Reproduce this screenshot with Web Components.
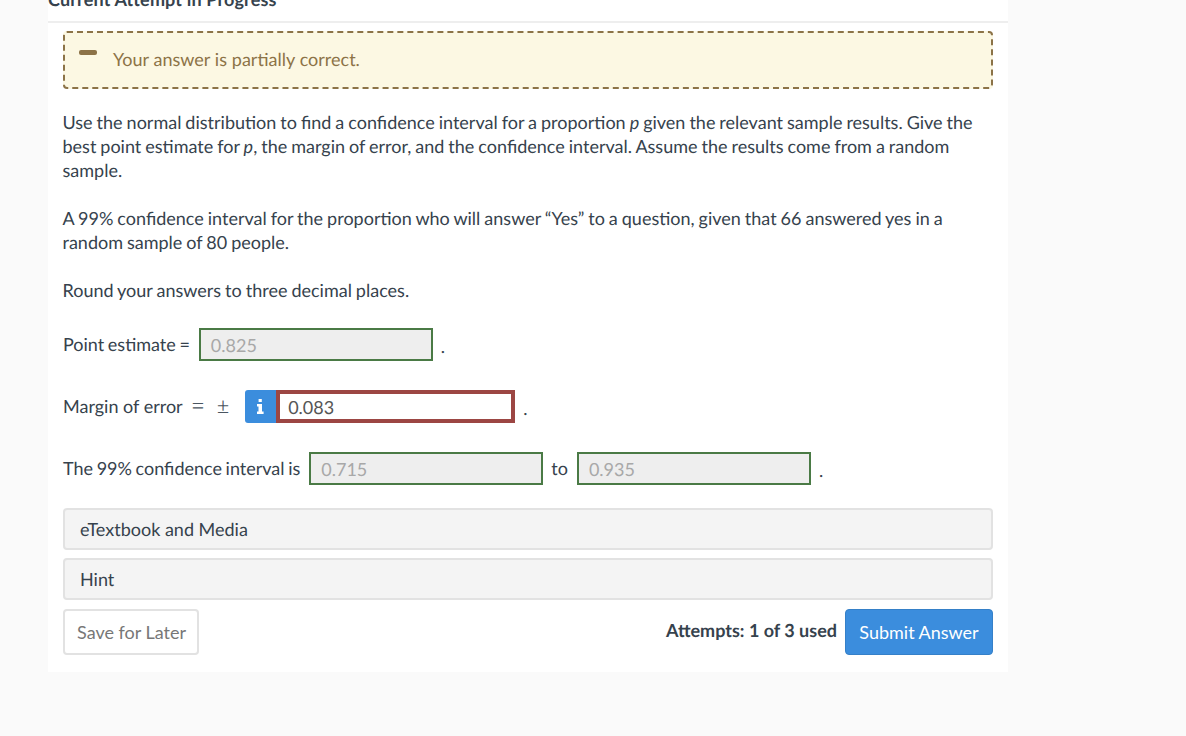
<!DOCTYPE html>
<html lang="en">
<head>
<meta charset="utf-8">
<title>Current Attempt in Progress</title>
<style>
    html, body { margin: 0; height: 736px; overflow: hidden; background: #fafafa; }
    body { font: 18px/24px Lato, "Liberation Sans", sans-serif; color: #36424d; text-rendering: geometricPrecision; }
    i { font-family: Lato, "Liberation Serif", serif; }
    .math { font: 22px/24px "Liberation Serif", serif; color: #4a5560; }
    .tight { word-spacing: -1px; }
</style>
</head>
<body>
<question-panel heading="Current Attempt in Progress">
    <status-alert>Your answer is partially correct.</status-alert>
    <question-text first>Use the normal distribution to find a confidence interval for a proportion <i>p</i> given the relevant sample results. Give the best point estimate for <i>p</i>, the margin of error, and the confidence interval. Assume the results come from a random sample.</question-text>
    <question-text>A 99% confidence interval for the proportion who will answer “Yes” to a question, given that 66 answered yes in a random sample of 80 people.</question-text>
    <question-text>Round your answers to three decimal places.</question-text>
    <answer-row top="26">
        <span class="tight">Point estimate =</span>
        <answer-field value="0.825" state="correct"></answer-field>
        <span class="dot">.</span>
    </answer-row>
    <answer-row top="29">
        <span>Margin of error</span><span class="math">=</span><span class="math" style="margin-left:4px;margin-right:7px">±</span>
        <answer-field value="0.083" state="wrong" info></answer-field>
        <span class="dot">.</span>
    </answer-row>
    <answer-row top="29">
        <span class="tight">The 99% confidence interval is</span>
        <answer-field value="0.715" state="correct"></answer-field>
        <span style="margin-left:-1px">to</span>
        <answer-field value="0.935" state="correct"></answer-field>
        <span class="dot">.</span>
    </answer-row>
    <collapse-bar top="23">eTextbook and Media</collapse-bar>
    <collapse-bar top="8">Hint</collapse-bar>
    <form-actions attempts="Attempts: 1 of 3 used"></form-actions>
</question-panel>

<script>
class QuestionPanel extends HTMLElement {
    constructor() {
        super();
        this.attachShadow({ mode: 'open' });
        this.shadowRoot.innerHTML = `
            <style>
                :host {
                    display: block;
                    width: 960px;
                    margin: -13px 0 0 48px;
                    background: #fff;
                }
                h2 {
                    margin: 0;
                    padding: 0 0 10px;
                    font-size: 18px;
                    line-height: 24px;
                    font-weight: 700;
                    letter-spacing: 0.15px;
                    border-bottom: 2px solid #eee;
                }
                .body {
                    padding: 8px 15px 17px;
                }
            </style>
            <h2></h2>
            <div class="body"><slot></slot></div>
        `;
        this.shadowRoot.querySelector('h2').textContent = this.getAttribute('heading');
    }
}

class StatusAlert extends HTMLElement {
    constructor() {
        super();
        this.attachShadow({ mode: 'open' });
        this.shadowRoot.innerHTML = `
            <style>
                :host {
                    display: flex;
                    box-sizing: border-box;
                    height: 58px;
                    padding: 14px 14px 0;
                    gap: 16px;
                    background: #fcf8e3;
                    border: 2px dashed #8c7347;
                    border-radius: 4px;
                    color: #8c7347;
                    word-spacing: 0.25px;
                }
                .icon {
                    width: 18px;
                    height: 5px;
                    margin-top: 3px;
                    flex: none;
                    background: #8c7347;
                    border-radius: 2px;
                }
            </style>
            <span class="icon"></span>
            <span><slot></slot></span>
        `;
    }
}

class QuestionText extends HTMLElement {
    constructor() {
        super();
        this.attachShadow({ mode: 'open' });
        this.shadowRoot.innerHTML = `
            <style>
                :host { display: block; margin: 24px 0 0 -0.5px; word-spacing: -0.62px; }
                :host([first]) { margin-top: 21px; }
            </style>
            <slot></slot>
        `;
    }
}

class AnswerRow extends HTMLElement {
    constructor() {
        super();
        this.attachShadow({ mode: 'open' });
        this.shadowRoot.innerHTML = `
            <style>
                :host {
                    display: flex;
                    align-items: center;
                    gap: 9px;
                    height: 33px;
                    margin-top: ${this.getAttribute('top')}px;
                }
                ::slotted(span) { margin-bottom: 2px; }
                ::slotted(.dot) { margin: 2px 0 0 -1px; }
            </style>
            <slot></slot>
        `;
    }
}

class AnswerField extends HTMLElement {
    constructor() {
        super();
        this.attachShadow({ mode: 'open' });
        const wrong = this.getAttribute('state') === 'wrong';
        const info = this.hasAttribute('info');
        this.shadowRoot.innerHTML = `
            <style>
                :host { display: inline-flex; height: 33px; }
                .info {
                    width: 31px;
                    display: flex;
                    align-items: center;
                    justify-content: center;
                    background: #3b8ddd;
                    border-radius: 3px 0 0 3px;
                }
                .value {
                    box-sizing: border-box;
                    width: ${info ? 239 : 234}px;
                    height: 33px;
                    padding: 0 10px;
                    line-height: 31px;
                    border: 2px solid #4a7a45;
                    background: #eee;
                    color: #a8a8a8;
                }
                .value.wrong {
                    border: 4px solid #9c4643;
                    background: #fff;
                    color: #555;
                    padding: 0 8px;
                    line-height: 26px;
                }
            </style>
            ${info ? `<span class="info"><svg width="9" height="15" viewBox="0 0 9 15"><path fill="#fff" d="M2.6 0h3.2v3H2.6zM1 5h5v7.4h1.6V15H1v-2.6h1.5V7.6H1z"/></svg></span>` : ''}
            <span class="value ${wrong ? 'wrong' : ''}">${this.getAttribute('value')}</span>
        `;
    }
}

class CollapseBar extends HTMLElement {
    constructor() {
        super();
        this.attachShadow({ mode: 'open' });
        this.shadowRoot.innerHTML = `
            <style>
                :host {
                    display: block;
                    box-sizing: border-box;
                    height: 42px;
                    margin-top: ${this.getAttribute('top')}px;
                    padding: 7px 15px;
                    background: #f4f4f4;
                    border: 2px solid #e2e2e2;
                    border-radius: 4px;
                }
            </style>
            <slot></slot>
        `;
    }
}

class FormActions extends HTMLElement {
    constructor() {
        super();
        this.attachShadow({ mode: 'open' });
        this.shadowRoot.innerHTML = `
            <style>
                :host {
                    display: flex;
                    align-items: center;
                    margin-top: 9px;
                }
                button {
                    box-sizing: border-box;
                    height: 46px;
                    padding: 0 12px;
                    font: inherit;
                    border-radius: 4px;
                    white-space: nowrap;
                }
                .later {
                    width: 136px;
                    background: #fff;
                    border: 2px solid #e2e2e2;
                    color: #777;
                }
                .attempts {
                    margin-left: auto;
                    margin-right: 8px;
                    margin-bottom: 4px;
                    font-weight: 700;
                }
                .submit {
                    width: 148px;
                    background: #3b8ddd;
                    border: 1px solid #3580c8;
                    color: #fff;
                }
            </style>
            <button class="later">Save for Later</button>
            <span class="attempts">${this.getAttribute('attempts')}</span>
            <button class="submit">Submit Answer</button>
        `;
    }
}

customElements.define('question-panel', QuestionPanel);
customElements.define('status-alert', StatusAlert);
customElements.define('question-text', QuestionText);
customElements.define('answer-row', AnswerRow);
customElements.define('answer-field', AnswerField);
customElements.define('collapse-bar', CollapseBar);
customElements.define('form-actions', FormActions);
</script>
</body>
</html>
